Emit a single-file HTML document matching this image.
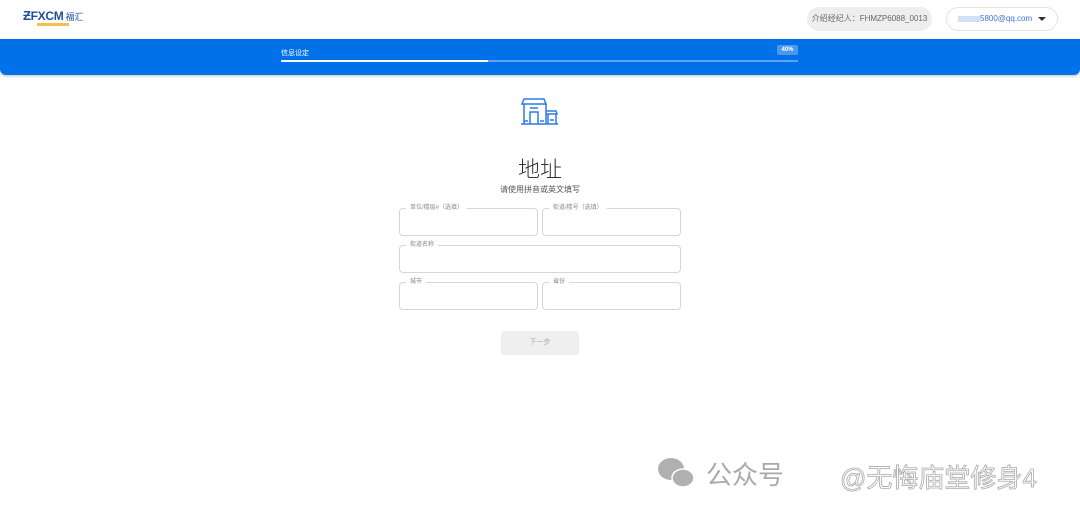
<!DOCTYPE html>
<html><head><meta charset="utf-8"><style>
*{margin:0;padding:0;box-sizing:border-box}
body{width:1080px;height:517px;background:#fff;font-family:"Liberation Sans","Noto Sans CJK SC",sans-serif;position:relative;overflow:hidden}
.a{position:absolute}
.fs{position:absolute;border:1px solid #d6d6d6;border-radius:4px}
.fs span{position:absolute;top:-6px;left:6px;background:#fff;padding:0 4px;font-size:6px;color:#888;line-height:10px}
</style></head><body>
<div class="a" style="left:23px;top:9px;font-weight:bold;color:#1d4f9c;font-size:12px;letter-spacing:-0.3px;line-height:14px">
<span style="font-size:13px">Ƶ</span>FXCM<span style="font-size:9px;font-weight:normal"> 福汇</span></div>
<div class="a" style="left:37px;top:23px;width:32px;height:3px;background:#f2c24a"></div>
<div class="a" style="left:807px;top:7px;width:125px;height:24px;border-radius:12px;background:#eeeeee;font-size:8px;color:#666;line-height:24px;text-align:center">介绍经纪人：FHMZP6088_0013</div>
<div class="a" style="left:946px;top:7px;width:112px;height:24px;border-radius:12px;border:1px solid #e3e3e3;font-size:8px;color:#3b73d8;line-height:22px">
<span style="display:inline-block;width:22px;height:6px;background:#cfe0f8;margin-left:11px;vertical-align:middle"></span>5800@qq.com
<span class="a" style="right:11px;top:9px;border:4px solid transparent;border-top:4px solid #333;border-bottom:0"></span></div>
<div class="a" style="left:0;top:39px;width:1080px;height:36px;background:#0071e8;border-radius:0 0 6px 6px;box-shadow:0 1px 3px rgba(0,0,0,.25)"></div>
<div class="a" style="left:281px;top:48px;font-size:7px;color:#fff">信息设定</div>
<div class="a" style="left:777px;top:45px;width:21px;height:10px;border-radius:2px;background:#4d98ef;font-size:6px;font-weight:bold;color:#fff;text-align:center;line-height:10px">40%</div>
<div class="a" style="left:281px;top:60px;width:517px;height:2px;background:#5fa2ee"></div>
<div class="a" style="left:281px;top:60px;width:207px;height:2px;background:#fff"></div>
<svg class="a" style="left:520px;top:97px" width="40" height="30" viewBox="0 0 40 30" fill="none" stroke="#2f7be0" stroke-width="1.5">
<path d="M4 2h20l2 5H2z"/><path d="M4 7v20M26 7v20"/><path d="M10 27V15h8v12"/><path d="M10 11h8"/><path d="M26 14h10l1 3H26M28 17v10M36 17v10"/><path d="M1 27h37"/><path d="M4 24h4M20 24h4M30 23h4"/></svg>
<div class="a" style="left:0;top:152px;width:1080px;text-align:center;font-size:22px;color:#333;font-family:'Noto Sans CJK SC',sans-serif;font-weight:300">地址</div>
<div class="a" style="left:0;top:184px;width:1080px;text-align:center;font-size:8px;color:#555">请使用拼音或英文填写</div>
<div class="fs" style="left:399px;top:208px;width:139px;height:28px"><span>单位/楼层#（选填）</span></div>
<div class="fs" style="left:542px;top:208px;width:139px;height:28px"><span>街道/楼号（选填）</span></div>
<div class="fs" style="left:399px;top:245px;width:282px;height:28px"><span>街道名称</span></div>
<div class="fs" style="left:399px;top:282px;width:139px;height:28px"><span>城市</span></div>
<div class="fs" style="left:542px;top:282px;width:139px;height:28px"><span>省份</span></div>
<div class="a" style="left:501px;top:331px;width:78px;height:24px;border-radius:3px;background:#efefef;font-size:7px;color:#aaa;text-align:center;line-height:24px">下一步</div>
<svg class="a" style="left:656px;top:455px" width="42" height="36"><ellipse cx="15" cy="14" rx="13" ry="11" fill="#b0b0b0"/><ellipse cx="27" cy="23" rx="11" ry="9" fill="#b0b0b0" stroke="#fff" stroke-width="1.5"/></svg>
<div class="a" style="left:706px;top:455px;font-size:26px;color:#aaa">公众号</div>
<div class="a" style="left:840px;top:458px;font-size:26px;color:#fff;-webkit-text-stroke:0.8px #aaa">@无悔庙堂修身4</div>
</body></html>
